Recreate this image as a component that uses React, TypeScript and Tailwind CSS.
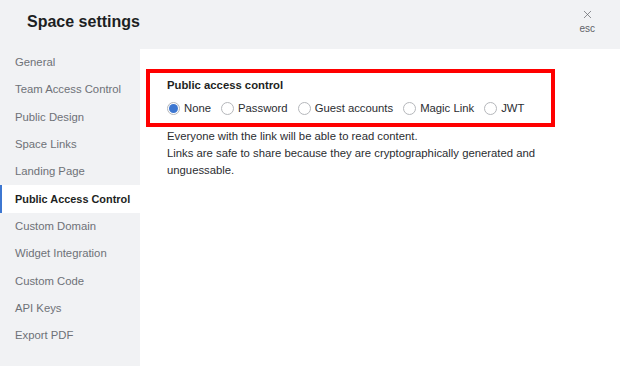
import { X } from "lucide-react";

const navItems = [
  "General",
  "Team Access Control",
  "Public Design",
  "Space Links",
  "Landing Page",
  "Public Access Control",
  "Custom Domain",
  "Widget Integration",
  "Custom Code",
  "API Keys",
  "Export PDF",
];

const options = ["None", "Password", "Guest accounts", "Magic Link", "JWT"];

function Radio({ checked }: { checked: boolean }) {
  return (
    <span className="flex h-[13px] w-[13px] shrink-0 items-center justify-center rounded-full border border-[#b5b7bb] bg-white">
      {checked && <span className="h-[9px] w-[9px] rounded-full bg-[#3d77d1]" />}
    </span>
  );
}

export default function App() {
  return (
    <div className="flex h-[366px] w-[620px] flex-col overflow-hidden bg-[#f1f2f4] font-['Liberation_Sans',Arial,sans-serif]">
      <header className="flex h-[49px] shrink-0 items-start justify-between pl-[27px] pr-[25px]">
        <h1 className="mt-[12px] text-[16px] font-bold leading-[20px] text-[#1d1f23]">Space settings</h1>
        <button className="mt-[8px] flex flex-col items-center text-[#5f6267]">
          <X className="h-[13px] w-[13px]" strokeWidth={1.3} />
          <span className="mt-[2px] text-[10px] leading-[12px]">esc</span>
        </button>
      </header>

      <div className="flex flex-1">
        <nav className="flex w-[140px] shrink-0 flex-col">
          {navItems.map((item, i) => {
            const active = i === 5;
            return (
              <div
                key={item}
                className={`flex h-[27.3px] items-center whitespace-nowrap ${
                  active
                    ? "border-l-2 border-[#3d77d1] bg-white pl-[13px] text-[10.9px] font-bold text-[#1d1f23]"
                    : "pl-[15px] text-[11.3px] text-[#6e7177]"
                }`}
              >
                {item}
              </div>
            );
          })}
        </nav>

        <main className="flex-1 bg-white pl-[6px] pt-[20px]">
          <div className="w-[409px] border-4 border-[#ff0000] pb-[7px] pl-[17px] pt-[4px]">
            <div className="text-[11.3px] font-bold leading-[16px] text-[#1d1f23]">Public access control</div>
            <div className="mt-[7px] flex items-center whitespace-nowrap text-[11.3px] leading-[16px] text-[#2b2d31]">
              {options.map((opt, i) => (
                <label key={opt} className="mr-[10px] flex items-center gap-[4px]">
                  <Radio checked={i === 0} />
                  <span>{opt}</span>
                </label>
              ))}
            </div>
          </div>
          <div className="w-[409px] pl-[21px] pt-[1px] text-[11.3px] leading-[17px] text-[#2b2d31]">
            <p>Everyone with the link will be able to read content.</p>
            <p>Links are safe to share because they are cryptographically generated and unguessable.</p>
          </div>
        </main>
      </div>
    </div>
  );
}
